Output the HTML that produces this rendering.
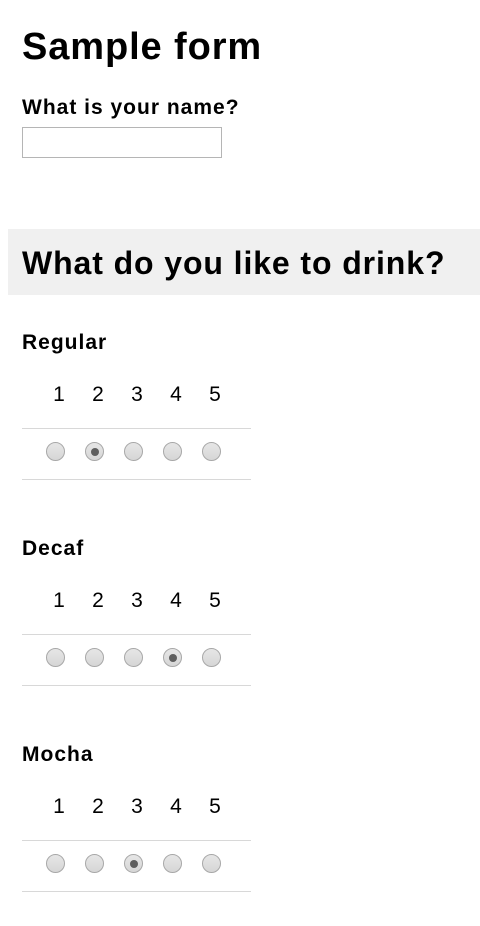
<!DOCTYPE html>
<html><head><style>
body{margin:0;width:480px;height:926px;background:#fff;font-family:"Liberation Sans",Arial,sans-serif;color:#000;position:relative;overflow:hidden}
.a{position:absolute;white-space:nowrap;font-weight:bold;line-height:1;letter-spacing:1px}
.n{position:absolute;font-size:21px;line-height:1;width:20px;text-align:center}
.l{position:absolute;left:22px;width:229px;height:1px;background:#d8d8d8}
.r{position:absolute;width:17px;height:17px;border-radius:50%;border:1px solid #a8a8a8;background:linear-gradient(#e6e6e6,#d6d6d6);box-sizing:content-box}
.r.s::after{content:"";position:absolute;left:4.5px;top:4.5px;width:8px;height:8px;border-radius:50%;background:#5e5e5e}
</style></head><body>
<div class="a" style="left:22px;top:28px;font-size:38px;letter-spacing:0.9px">Sample form</div>
<div class="a" style="left:22px;top:97px;font-size:21px">What is your name?</div>
<div style="position:absolute;left:22px;top:127px;width:198px;height:29px;border:1px solid #b5b5b5"></div>
<div style="position:absolute;left:8px;top:229px;width:472px;height:66px;background:#f0f0f0"></div>
<div class="a" style="left:22px;top:247px;font-size:32px;letter-spacing:0.9px">What do you like to drink?</div>

<div class="a" style="left:22px;top:332px;font-size:21px">Regular</div>
<div class="n" style="left:49px;top:384px">1</div><div class="n" style="left:88px;top:384px">2</div><div class="n" style="left:127px;top:384px">3</div><div class="n" style="left:166px;top:384px">4</div><div class="n" style="left:205px;top:384px">5</div>
<div class="l" style="top:428px"></div>
<div class="r" style="left:46px;top:442px"></div><div class="r s" style="left:85px;top:442px"></div><div class="r" style="left:124px;top:442px"></div><div class="r" style="left:163px;top:442px"></div><div class="r" style="left:202px;top:442px"></div>
<div class="l" style="top:479px"></div>

<div class="a" style="left:22px;top:538px;font-size:21px">Decaf</div>
<div class="n" style="left:49px;top:590px">1</div><div class="n" style="left:88px;top:590px">2</div><div class="n" style="left:127px;top:590px">3</div><div class="n" style="left:166px;top:590px">4</div><div class="n" style="left:205px;top:590px">5</div>
<div class="l" style="top:634px"></div>
<div class="r" style="left:46px;top:648px"></div><div class="r" style="left:85px;top:648px"></div><div class="r" style="left:124px;top:648px"></div><div class="r s" style="left:163px;top:648px"></div><div class="r" style="left:202px;top:648px"></div>
<div class="l" style="top:685px"></div>

<div class="a" style="left:22px;top:744px;font-size:21px">Mocha</div>
<div class="n" style="left:49px;top:796px">1</div><div class="n" style="left:88px;top:796px">2</div><div class="n" style="left:127px;top:796px">3</div><div class="n" style="left:166px;top:796px">4</div><div class="n" style="left:205px;top:796px">5</div>
<div class="l" style="top:840px"></div>
<div class="r" style="left:46px;top:854px"></div><div class="r" style="left:85px;top:854px"></div><div class="r s" style="left:124px;top:854px"></div><div class="r" style="left:163px;top:854px"></div><div class="r" style="left:202px;top:854px"></div>
<div class="l" style="top:891px"></div>
</body></html>
